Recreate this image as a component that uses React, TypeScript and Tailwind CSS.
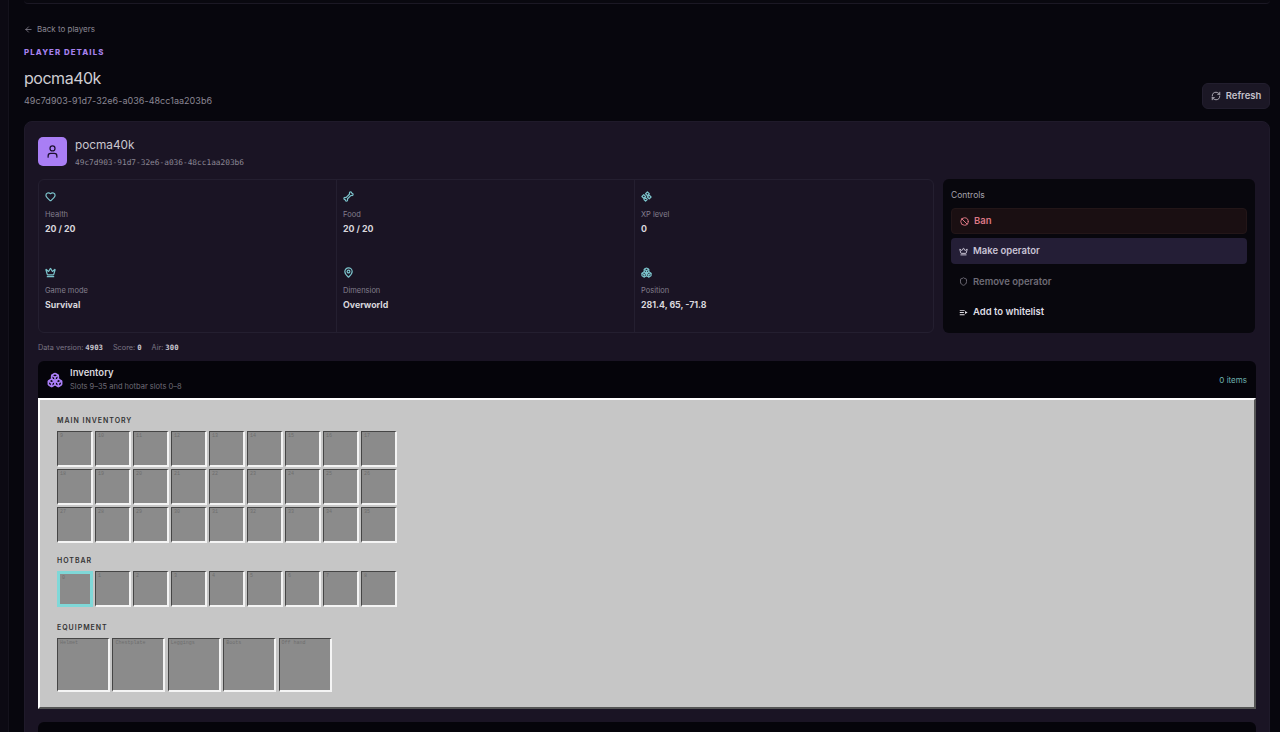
import { ArrowLeft, Ban, Bone, Boxes, Crown, Heart, MapPin, RefreshCw, Shield, User } from "lucide-react";
import type { ReactNode, SVGProps } from "react";

// four small diamonds, the XP glyph
function XpIcon(props: SVGProps<SVGSVGElement>) {
  return (
    <svg viewBox="0 0 24 24" fill="none" stroke="currentColor" strokeWidth={2.6} strokeLinejoin="round" {...props}>
      <path d="M14 2l4 4-4 4-4-4z" />
      <path d="M6 8l4 4-4 4-4-4z" />
      <path d="M18 9l4 4-4 4-4-4z" />
      <path d="M10 15l3.5 3.5L10 22l-3.5-3.5z" />
    </svg>
  );
}

// lines with a small arrow head on the right
function WhitelistIcon(props: SVGProps<SVGSVGElement>) {
  return (
    <svg viewBox="0 0 24 24" fill="currentColor" {...props}>
      <path d="M2 5h13v2.6H2zM2 10.7h11v2.6H2zM2 16.4h13V19H2z" />
      <path d="M16 8l7 4-7 4z" />
    </svg>
  );
}

const stats = [
  { label: "Health", value: "20 / 20", icon: Heart },
  { label: "Food", value: "20 / 20", icon: Bone },
  { label: "XP level", value: "0", icon: XpIcon },
  { label: "Game mode", value: "Survival", icon: Crown },
  { label: "Dimension", value: "Overworld", icon: MapPin },
  { label: "Position", value: "281.4, 65, -71.8", icon: Boxes },
];

const mainSlots = Array.from({ length: 27 }, (_, i) => i + 9);
const hotbarSlots = Array.from({ length: 9 }, (_, i) => i);
const equipment = ["Helmet", "Chestplate", "Leggings", "Boots", "Off hand"];

function Slot({ label, selected = false, large = false }: { label: string | number; selected?: boolean; large?: boolean }) {
  return (
    <div
      className={`${large ? "h-[54px] w-[53px]" : "h-9 w-9"} ${
        selected
          ? "border-[3px] border-[#7fd8d8]"
          : "border-t border-l border-r-2 border-b-2 border-t-[#454545] border-l-[#454545] border-r-[#f4f4f4] border-b-[#f4f4f4]"
      } bg-[#8b8b8b] pl-[2px] font-['Liberation_Mono',monospace] text-[5px] leading-[9px] text-[#6e6e6e]`}
    >
      {label}
    </div>
  );
}

function SectionLabel({ children }: { children: ReactNode }) {
  return <p className="text-[7px] leading-[10px] font-semibold tracking-[0.14em] text-[#333333]">{children}</p>;
}

export default function App() {
  return (
    <div className="flex h-[732px] overflow-hidden bg-[#07060d] font-['Inter',sans-serif]">
      <div className="w-[9px] shrink-0 border-r border-[#14121c] bg-[#0c0a13]" />

      <main className="min-w-0 flex-1 pr-[10px] pl-[15px]">
        <div className="h-[4px] rounded-b border-b border-[#1b1824] bg-[#09080f]" />

        <div className="mt-[20px] flex items-center gap-[4px] text-[8px] leading-[10px] text-[#8b8794]">
          <ArrowLeft className="h-[9px] w-[9px]" />
          <span>Back to players</span>
        </div>

        <div className="flex items-end justify-between">
          <div>
            <p className="mt-[13px] text-[7.8px] leading-[10px] font-extrabold tracking-[0.14em] text-[#a580ec]">PLAYER DETAILS</p>
            <h1 className="mt-[10px] text-[16px] leading-[22px] tracking-[-0.03em] text-[#cfcdd3]">pocma40k</h1>
            <p className="mt-[6px] text-[9px] leading-[12px] tracking-[0.005em] text-[#8b8794]">49c7d903-91d7-32e6-a036-48cc1aa203b6</p>
          </div>
          <button className="mb-[-2px] flex h-[26px] w-[68px] items-center justify-center gap-[5px] rounded-md border border-[#221e2e] bg-[#1b1725] text-[9.5px] font-semibold text-[#c4c1cb]">
            <RefreshCw className="h-[10px] w-[10px]" />
            Refresh
          </button>
        </div>

        <section className="mt-[14px] rounded-t-lg border border-[#1f1a2a] bg-[#1a1424] px-[13px] pt-[15px]">
          <div className="flex h-[30px] items-start gap-[8px]">
            <div className="flex h-[29px] w-[29px] items-center justify-center rounded-[5px] bg-[#a97ef5]">
              <User className="h-[15px] w-[15px] text-[#1c1030]" />
            </div>
            <div className="mt-[1px]">
              <p className="text-[11.8px] leading-[15px] text-[#c9c6cf]">pocma40k</p>
              <p className="mt-[5px] font-['DejaVu_Sans_Mono',monospace] text-[7.8px] leading-[10px] text-[#8b8794]">49c7d903-91d7-32e6-a036-48cc1aa203b6</p>
            </div>
          </div>

          <div className="mt-[12px] flex gap-[9px]">
            <div className="grid h-[154px] w-[896px] grid-cols-3 rounded-md border border-[#241f30]">
              {stats.map((stat, i) => {
                const Icon = stat.icon;
                return (
                  <div key={stat.label} className={`px-[6px] pt-[11px] ${i % 3 !== 2 ? "border-r border-[#241f30]" : ""}`}>
                    <Icon className="h-[11px] w-[11px] text-[#7cc4cc]" strokeWidth={2.6} />
                    <p className="mt-[8px] text-[7.5px] leading-[10px] text-[#837f8d]">{stat.label}</p>
                    <p className="mt-[3px] text-[8.8px] leading-[12px] font-bold text-[#d8d6dc]">{stat.value}</p>
                  </div>
                );
              })}
            </div>

            <div className="flex h-[154px] w-[312px] flex-col rounded-md bg-[#08070d] px-[8px] pt-[11px]">
              <p className="text-[8.5px] leading-[11px] text-[#a5a2ac]">Controls</p>
              <div className="mt-[7px] flex flex-col gap-[4.4px]">
                <div className="flex h-[26px] items-center gap-[5px] rounded-[4px] border border-[#231618] bg-[#1a0f12] px-[8px] text-[9.5px] font-semibold text-[#dd7784]">
                  <Ban className="h-[9px] w-[9px]" strokeWidth={2.6} />
                  Ban
                </div>
                <div className="flex h-[26px] items-center gap-[5px] rounded-[4px] bg-[#241e36] px-[8px] text-[9.5px] font-semibold text-[#c8c3d4]">
                  <Crown className="h-[9px] w-[9px]" strokeWidth={2.6} />
                  Make operator
                </div>
                <div className="flex h-[26px] items-center gap-[5px] px-[8px] text-[9.5px] font-semibold text-[#6e6b76]">
                  <Shield className="h-[9px] w-[9px]" strokeWidth={2.6} />
                  Remove operator
                </div>
                <div className="flex h-[26px] items-center gap-[5px] px-[8px] text-[9.5px] font-semibold text-[#dedce2]">
                  <WhitelistIcon className="h-[9px] w-[9px]" />
                  Add to whitelist
                </div>
              </div>
            </div>
          </div>

          <div className="mt-[10px] flex gap-[10px] text-[7.3px] leading-[10px] text-[#7a7684]">
            <span>Data version: <b className="font-['DejaVu_Sans_Mono',monospace] text-[#c9c6cf]">4903</b></span>
            <span>Score: <b className="font-['DejaVu_Sans_Mono',monospace] text-[#c9c6cf]">0</b></span>
            <span>Air: <b className="font-['DejaVu_Sans_Mono',monospace] text-[#c9c6cf]">300</b></span>
          </div>

          <div className="mt-[8px] overflow-hidden rounded-t-md">
            <div className="flex h-[37px] items-center justify-between bg-[#05040a] px-[9px]">
              <div className="flex items-center gap-[7px]">
                <Boxes className="h-[16px] w-[16px] text-[#a97ef5]" strokeWidth={2.4} />
                <div>
                  <p className="text-[9.5px] leading-[12px] font-semibold text-[#d8d6dc]">Inventory</p>
                  <p className="mt-[3px] text-[7.5px] leading-[10px] text-[#6e6b76]">Slots 9–35 and hotbar slots 0–8</p>
                </div>
              </div>
              <span className="text-[8px] text-[#6fb3b0]">0 items</span>
            </div>

            <div className="h-[311px] border-2 border-t-white border-l-white border-r-[#555] border-b-[#555] bg-[#c6c6c6] pt-[16px] pl-[17px]">
              <SectionLabel>MAIN INVENTORY</SectionLabel>
              <div className="mt-[5px] grid w-fit grid-cols-9 gap-[2px]">
                {mainSlots.map((n) => (
                  <Slot key={n} label={n} />
                ))}
              </div>

              <div className="mt-[13px]">
                <SectionLabel>HOTBAR</SectionLabel>
              </div>
              <div className="mt-[5px] grid w-fit grid-cols-9 gap-[2px]">
                {hotbarSlots.map((n) => (
                  <Slot key={n} label={n} selected={n === 0} />
                ))}
              </div>

              <div className="mt-[16px]">
                <SectionLabel>EQUIPMENT</SectionLabel>
              </div>
              <div className="mt-[5px] flex gap-[2.4px]">
                {equipment.map((name) => (
                  <Slot key={name} label={name} large />
                ))}
              </div>
            </div>
          </div>

          <div className="mt-[13px] h-[40px] rounded-t-md bg-[#05040a]" />
        </section>
      </main>
    </div>
  );
}
